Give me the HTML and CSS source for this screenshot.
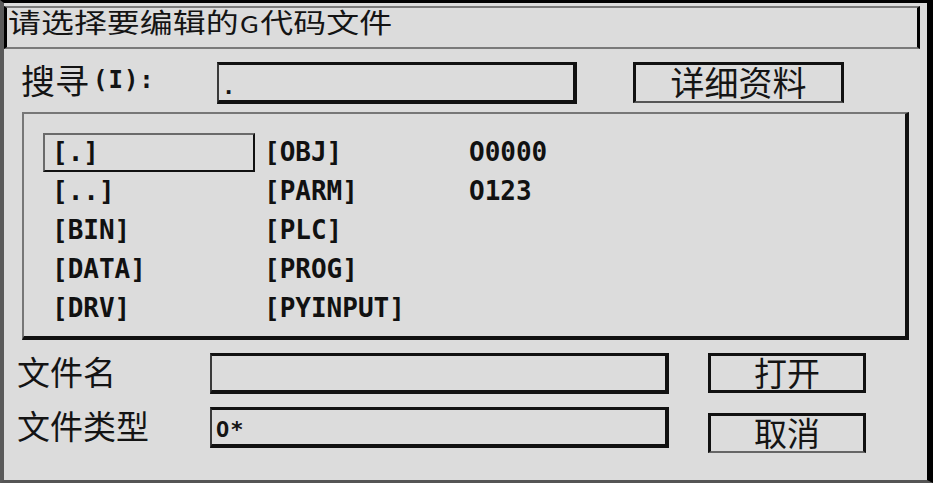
FILE: index.html
```html
<!DOCTYPE html>
<html lang="zh-CN">
<head>
    <meta charset="UTF-8">
    <title>请选择要编辑的G代码文件</title>
    <link rel="stylesheet" href="styles.css">
</head>
<body>

<div class="dialog">
    <div class="title"><span class="title-text">请选择要编辑的<span class="title-latin">G</span>代码文件</span></div>

    <div class="search-row">
        <div class="search-label">
            <span class="label-cjk">搜寻</span><span class="mono-sm label-key">(I):</span>
        </div>
        <div class="field search-field"><span class="mono-sm">.</span></div>
        <div class="btn btn-details"><span>详细资料</span></div>
    </div>

    <div class="file-list">
        <div class="file-item selected">[.]</div>
        <div class="file-item">[..]</div>
        <div class="file-item">[BIN]</div>
        <div class="file-item">[DATA]</div>
        <div class="file-item">[DRV]</div>
        <div class="file-item">[OBJ]</div>
        <div class="file-item">[PARM]</div>
        <div class="file-item">[PLC]</div>
        <div class="file-item">[PROG]</div>
        <div class="file-item">[PYINPUT]</div>
        <div class="file-item">O0000</div>
        <div class="file-item">O123</div>
    </div>

    <div class="bottom">
        <div class="fields">
            <div class="label">文件名</div>
            <div class="field"></div>
            <div class="label">文件类型</div>
            <div class="field type-field"><span class="mono-sm">O*</span></div>
        </div>
        <div class="buttons">
            <div class="btn btn-small">打开</div>
            <div class="btn btn-small btn-cancel">取消</div>
        </div>
    </div>
</div>

</body>
</html>
```

FILE: styles.css
```css
body {
    margin: 0;
    background: #000;
}

.dialog {
    box-sizing: border-box;
    width: 933px;
    height: 483px;
    border-top: 3px solid #000;
    border-left: 4px solid #5a5a5a;
    border-right: 6px solid #000;
    border-bottom: 3px solid #555;
    background: #dcdcdc;
    font-family: "Noto Sans CJK SC", sans-serif;
    color: #141414;
}

/* title bar */
.title {
    box-sizing: border-box;
    height: 43px;
    margin: 3px 7px 0 0;
    padding-left: 1px;
    border-left: 3px solid #000;
    border-right: 3px solid #000;
    border-top: 2px solid #7a7a7a;
    border-bottom: 2px solid #7a7a7a;
}

.title-text {
    display: inline-block;
    font-size: 27px;
    line-height: 27px;
    transform: scaleX(1.22);
    transform-origin: left top;
}

.title-latin {
    font-size: 23px;
    margin: 0 1px;
}

/* small pixel-ish font */
.mono-sm {
    font-family: "DejaVu Sans Mono", monospace;
    font-weight: bold;
    font-size: 22px;
    line-height: 22px;
    letter-spacing: 1px;
}

/* search row */
.search-row {
    display: flex;
    align-items: flex-start;
    height: 42px;
    margin-top: 13px;
    padding-left: 17px;
}

.search-label {
    display: flex;
    align-items: flex-start;
    width: 196px;
}

.label-cjk {
    font-size: 34px;
    line-height: 34px;
    margin-top: 1px;
}

.label-key {
    font-size: 24px;
    line-height: 24px;
    margin: 6px 0 0 4px;
}

.field {
    box-sizing: border-box;
    height: 41px;
    border-top: 3px solid #111;
    border-left: 2px solid #3a3a3a;
    border-right: 4px solid #111;
    border-bottom: 4px solid #111;
}

.search-field {
    width: 360px;
    height: 42px;
    padding: 10px 0 0 3px;
}

.btn {
    box-sizing: border-box;
    text-align: center;
    border: 3px solid #111;
}

.btn-details {
    width: 211px;
    height: 41px;
    margin-left: 56px;
    border-bottom: 2px solid #555;
    font-size: 34px;
    line-height: 34px;
}

/* file list */
.file-list {
    box-sizing: border-box;
    width: 887px;
    height: 228px;
    margin: 8px 0 0 18px;
    padding: 19px 0 0 19px;
    border-top: 2px solid #777;
    border-left: 2px solid #777;
    border-right: 4px solid #111;
    border-bottom: 4px solid #111;
    display: grid;
    grid-template-rows: repeat(5, 39px);
    grid-template-columns: 212px 205px 1fr;
    grid-auto-flow: column;
}

.file-item {
    padding-left: 7px;
    border: 2px solid transparent;
    font-family: "DejaVu Sans Mono", monospace;
    font-weight: bold;
    font-size: 26px;
    line-height: 35px;
    color: #111;
}

.file-item.selected {
    border-color: #6a6a6a #111 #111 #6a6a6a;
}

/* file name / type */
.bottom {
    display: flex;
    margin-top: 13px;
    padding-left: 13px;
}

.fields {
    display: grid;
    grid-template-columns: 193px 459px;
    grid-auto-rows: 41px;
    row-gap: 13px;
}

.label {
    font-size: 33px;
    line-height: 33px;
    margin-top: 2px;
}

.type-field {
    padding: 8px 0 0 4px;
}

.buttons {
    display: flex;
    flex-direction: column;
    gap: 20px;
    margin-left: 39px;
}

.btn-small {
    width: 158px;
    height: 40px;
    font-size: 33px;
    line-height: 33px;
}

.btn-cancel {
    border-bottom: 2px solid #666;
}
```
